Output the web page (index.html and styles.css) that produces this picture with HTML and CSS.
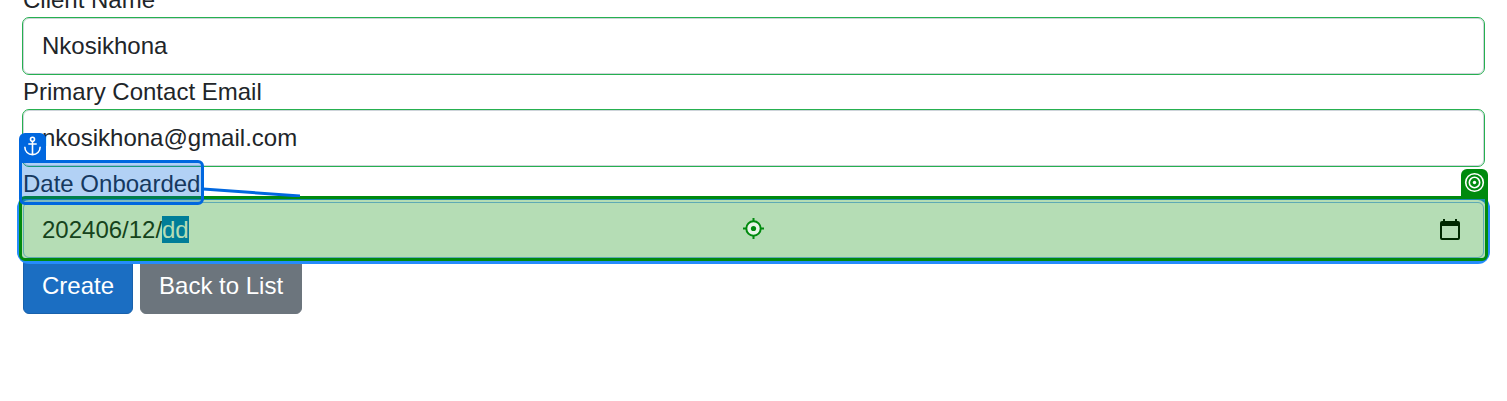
FILE: index.html
```html
<!DOCTYPE html>
<html lang="en">
<head>
<meta charset="utf-8">
<title>Create client</title>
<link rel="stylesheet" href="styles.css">
</head>
<body>
<form class="form">
  <label class="label" for="name">Client Name</label>
  <input class="input" id="name" type="text" value="Nkosikhona">
  <label class="label" for="email">Primary Contact Email</label>
  <input class="input" id="email" type="email" value="nkosikhona@gmail.com">
  <div class="anchor">
    <label class="label" for="date">Date Onboarded</label>
    <span class="mark mark-anchor"></span>
    <span class="badge badge-anchor">
      <svg width="21" height="21" viewBox="0 0 21 21" fill="none" stroke="#fff" stroke-width="1.6">
        <circle cx="10.5" cy="3.3" r="2"/>
        <path d="M10.5 5.3V18.5M6.3 8H14.7M2.8 10.8C2.8 15.6 6.2 18.6 10.5 18.6S18.2 15.6 18.2 10.8"/>
      </svg>
    </span>
    <svg class="connector" width="97" height="12" viewBox="0 0 97 12"><path d="M0 4L97 11" stroke="#0067df" stroke-width="3"/></svg>
  </div>
  <div class="target">
    <input class="input input-focus" id="date" type="text" value="202406/12/">
    <span class="segment">dd</span>
    <svg class="calendar" width="22" height="24" viewBox="0 0 22 24"><path d="M4 1H6V3H16V1H18V3H19Q21 3 21 5V20Q21 22 19 22H3Q1 22 1 20V5Q1 3 3 3H4ZM3 8V20H19V8Z" fill="#000" fill-rule="evenodd"/></svg>
    <span class="mark mark-target">
      <svg width="21" height="22" viewBox="0 0 21 22" fill="none" stroke="#008a0e" stroke-width="2">
        <circle cx="10.5" cy="10.5" r="7.2" fill="#e8f5e8"/>
        <path d="M10.5 0V4M10.5 17V21M0 10.5H4M17 10.5H21"/>
        <circle cx="10.5" cy="10.5" r="2.6" fill="#008a0e" stroke="none"/>
      </svg>
    </span>
    <span class="badge badge-target">
      <svg width="21" height="21" viewBox="0 0 21 21" fill="none" stroke="#fff" stroke-width="1.6">
        <circle cx="10.5" cy="10.5" r="8.8"/>
        <circle cx="10.5" cy="10.5" r="5.2"/>
        <circle cx="10.5" cy="10.5" r="1.7" fill="#fff" stroke="none"/>
      </svg>
    </span>
  </div>
  <div class="actions">
    <button class="button button-primary" type="button">Create</button>
    <a class="button button-secondary" href="#">Back to List</a>
  </div>
</form>
</body>
</html>
```

FILE: styles.css
```css
* {
  box-sizing: border-box;
}

html {
  overflow: hidden;
}

body {
  margin: 0;
  background: #fff;
  color: #212529;
  font: 24px/36px "Liberation Sans", Arial, sans-serif;
}

.form {
  display: flex;
  flex-direction: column;
  margin-top: -18px;
  padding: 0 23px;
}

.label {
  display: block;
}

.input {
  display: block;
  width: 100%;
  height: 56px;
  padding: 0 18px;
  border: 1px solid #ced4da;
  border-radius: 6px;
  outline: 1px solid #26b050;
  background: #fff;
  color: #212529;
  font: inherit;
}

.input-focus {
  border-color: #86b7fe;
  outline: none;
  box-shadow: 0 0 0 2px #fff, 0 0 0 6px #258cfb;
}

.anchor,
.target {
  position: relative;
}

.anchor {
  z-index: 2;
  align-self: flex-start;
}

.target {
  z-index: 1;
}

.mark {
  position: absolute;
  inset: -6px -4px -3px;
  border: 3px solid;
  border-radius: 6px;
  pointer-events: none;
}

.mark-anchor {
  border-color: #0067df;
  border-top-left-radius: 0;
  background: rgba(0, 103, 223, 0.3);
}

.mark-target {
  display: flex;
  align-items: center;
  justify-content: center;
  border-color: #008a0e;
  border-top-right-radius: 0;
  background: rgba(0, 138, 0, 0.29);
}

.badge {
  position: absolute;
  bottom: 100%;
  display: flex;
  align-items: center;
  justify-content: center;
  width: 27px;
  height: 27px;
  margin-bottom: 6px;
  border-radius: 6px 6px 0 0;
}

.badge-anchor {
  left: -4px;
  background: #0067df;
}

.badge-target {
  right: -4px;
  background: #008a0e;
}

.connector {
  position: absolute;
  top: 19px;
  left: 100%;
  margin-left: 3px;
}

.segment {
  position: absolute;
  top: 14px;
  left: 139px;
  background: #0078d7;
  color: #fff;
  line-height: 27px;
}

.calendar {
  position: absolute;
  top: 16px;
  right: 23px;
}

.actions {
  display: flex;
  gap: 7px;
}

.button {
  padding: 9px 18px;
  border: 1px solid;
  border-radius: 6px;
  color: #fff;
  font: inherit;
  text-decoration: none;
}

.button-primary {
  border-color: #1861ac;
  background: #1b6ec2;
}

.button-secondary {
  border-color: #6c757d;
  background: #6c757d;
}
```
